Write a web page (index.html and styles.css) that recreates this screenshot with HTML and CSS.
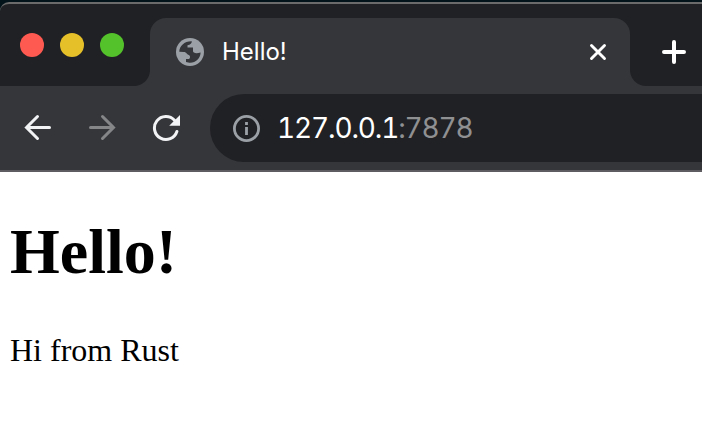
FILE: index.html
```html
<!DOCTYPE html>
<html lang="en">
<head>
<meta charset="utf-8">
<title>Hello!</title>
<link rel="stylesheet" href="styles.css">
</head>
<body>
<div class="window">
  <div class="tabstrip">
    <div class="lights"><span class="light red"></span><span class="light yellow"></span><span class="light green"></span></div>
    <div class="tab">
      <svg class="globe" viewBox="0 0 28 28"><circle cx="14" cy="14" r="14" fill="#9aa0a6"/><path d="M3.300 13.700C3.300 8 8.500 3 15.800 3.200C15.800 5.500 14.500 6.500 11.500 7.300V9.500H17V13C17 15 20 16 24.600 14.500C24.500 20.500 19.500 25 13.500 24.700L10 24V21H13C14.300 20.500 14.600 18 13 17C10.500 16.500 10.500 14 8 14Z" fill="#35363a"/></svg>
      <span class="tab-title">Hello!</span>
      <svg class="close" viewBox="0 0 18 18"><path d="M2.500 2.500L15.500 15.500M15.500 2.500L2.500 15.500"/></svg>
    </div>
    <svg class="plus" viewBox="0 0 24 24"><path d="M12 2V22M2 12H22"/></svg>
  </div>
  <div class="toolbar">
    <svg class="nav" viewBox="0 0 28 28"><path d="M25.500 13.500H2.500M13.500 2.500L2.500 13.500L13.500 24.500"/></svg>
    <svg class="nav forward" viewBox="0 0 28 28"><path d="M2.500 13.500H25.500M14.500 2.500L25.500 13.500L14.500 24.500"/></svg>
    <svg class="nav reload" viewBox="0 0 28 28"><path d="M24.900 17.500A11.500 11.500 0 1 1 22.500 6.300"/><path class="head" d="M28 1V11.800H17.200Z"/></svg>
    <div class="address">
      <svg class="info" viewBox="0 0 28 28"><circle cx="14.500" cy="14.500" r="12.100"/><path d="M14.500 13V21M14.500 8V11"/></svg>
      <span class="url">127.0.0.1<span class="port">:7878</span></span>
    </div>
  </div>
</div>
<main class="page">
  <h1>Hello!</h1>
  <p>Hi from Rust</p>
</main>
</body>
</html>
```
FILE: styles.css
```css
* { box-sizing: border-box; }
body { margin: 0; width: 702px; height: 422px; overflow: hidden; background: #fff; color: #000; }
svg { display: block; flex: none; }
.window { height: 172px; padding-top: 2px; background: #02141a; overflow: hidden; }
.tabstrip { display: flex; align-items: flex-start; height: 84px; border-top: 2px solid #6b6b6b; border-radius: 9px 0 0 0; background: #202124; }
.lights { display: flex; gap: 16px; width: 150px; height: 82px; padding: 29px 0 0 20px; }
.light { width: 24px; height: 24px; border-radius: 50%; }
.red { background: #ff5a52; }
.yellow { background: #e6c029; }
.green { background: #53c22b; }
.tab { position: relative; display: flex; align-items: center; width: 480px; height: 68px; margin-top: 14px; padding: 0 23px 0 26px; border-radius: 16px 16px 0 0; background: #35363a; }
.tab::before, .tab::after { content: ""; position: absolute; bottom: 0; width: 16px; height: 16px; }
.tab::before { left: -16px; background: radial-gradient(circle at 0 0, #202124 15.5px, #35363a 16.5px); }
.tab::after { right: -16px; background: radial-gradient(circle at 100% 0, #202124 15.5px, #35363a 16.5px); }
.globe { width: 28px; height: 28px; }
.tab-title { margin-left: 18px; color: #fff; font: 400 24px/32px Inter, sans-serif; }
.close { width: 18px; height: 18px; margin-left: auto; fill: none; stroke: #fff; stroke-width: 2.9; stroke-linecap: round; }
.plus { width: 24px; height: 24px; margin: 36px 0 0 32px; fill: none; stroke: #fff; stroke-width: 4; stroke-linecap: round; }
.toolbar { display: flex; align-items: center; gap: 36px; height: 86px; padding-left: 24px; border-bottom: 2px solid #5f5c61; background: #35363a; }
.nav { width: 28px; height: 28px; fill: none; stroke: #f1f3f4; stroke-width: 3; stroke-linecap: round; }
.forward { stroke: #858688; }
.reload .head { fill: #f1f3f4; stroke: none; }
.address { display: flex; align-items: center; flex: 1; height: 68px; margin-left: -6px; padding-left: 22px; border-radius: 34px 0 0 34px; background: #202124; }
.info { width: 28px; height: 28px; fill: none; stroke: #9aa0a6; stroke-width: 2.8; }
.url { margin-left: 17px; color: #fff; font: 400 28px/36px Inter, sans-serif; font-variant-numeric: tabular-nums; letter-spacing: -1.15px; }
.port { color: #8f9092; }
.page { padding: 0 10px; font-family: "Liberation Serif", serif; }
h1 { margin: 43px 0 0; font-size: 64px; line-height: 74px; }
p { margin: 43px 0 0; font-size: 32px; line-height: 36px; }
```
